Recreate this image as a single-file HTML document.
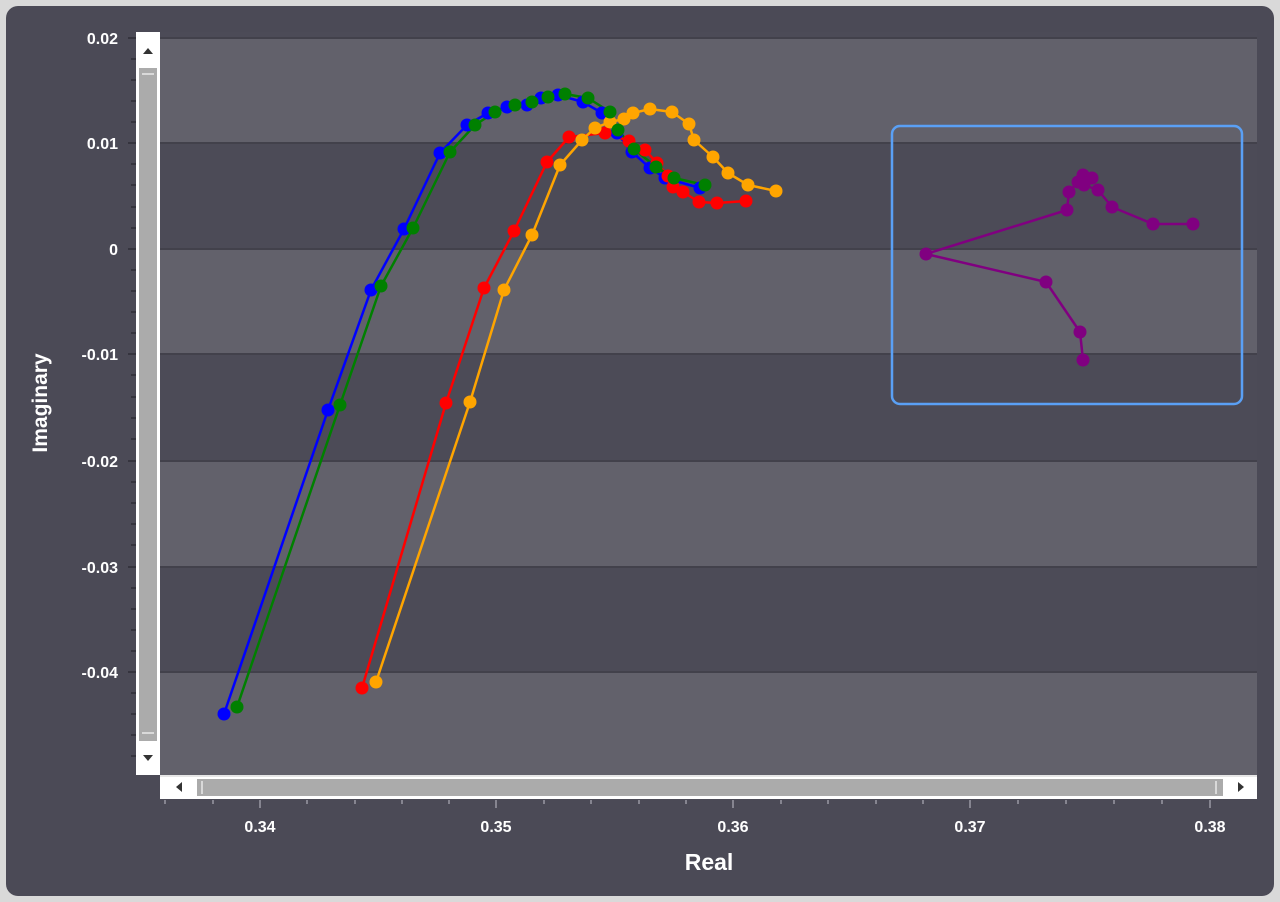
<!DOCTYPE html>
<html><head><meta charset="utf-8"><style>
html,body{margin:0;padding:0;background:#d9d9d9;width:1280px;height:902px;overflow:hidden}
svg{display:block;font-family:"Liberation Sans",sans-serif}
</style></head><body>
<svg width="1280" height="902" viewBox="0 0 1280 902">
<rect x="0" y="0" width="1280" height="902" fill="#d9d9d9"/>
<rect x="6" y="6" width="1268" height="890" rx="12" fill="#4b4a56"/>
<rect x="160" y="32" width="1097" height="743" fill="#4c4b57"/>
<g fill="#62616b">
<rect x="160" y="38" width="1097" height="105"/>
<rect x="160" y="249" width="1097" height="105"/>
<rect x="160" y="461" width="1097" height="106"/>
<rect x="160" y="672" width="1097" height="103"/>
</g>
<g stroke="#42414b" stroke-width="2">
<line x1="160" y1="38" x2="1257" y2="38"/><line x1="160" y1="143" x2="1257" y2="143"/>
<line x1="160" y1="249" x2="1257" y2="249"/><line x1="160" y1="354" x2="1257" y2="354"/>
<line x1="160" y1="461" x2="1257" y2="461"/><line x1="160" y1="567" x2="1257" y2="567"/>
<line x1="160" y1="672" x2="1257" y2="672"/>
</g>
<g stroke="#2e2d36" stroke-width="1.5">
<line x1="128" y1="38" x2="136" y2="38"/><line x1="131" y1="59" x2="136" y2="59"/><line x1="131" y1="80" x2="136" y2="80"/><line x1="131" y1="101" x2="136" y2="101"/><line x1="131" y1="122" x2="136" y2="122"/>
<line x1="128" y1="143" x2="136" y2="143"/><line x1="131" y1="164" x2="136" y2="164"/><line x1="131" y1="185" x2="136" y2="185"/><line x1="131" y1="207" x2="136" y2="207"/><line x1="131" y1="228" x2="136" y2="228"/>
<line x1="128" y1="249" x2="136" y2="249"/><line x1="131" y1="270" x2="136" y2="270"/><line x1="131" y1="291" x2="136" y2="291"/><line x1="131" y1="312" x2="136" y2="312"/><line x1="131" y1="333" x2="136" y2="333"/>
<line x1="128" y1="354" x2="136" y2="354"/><line x1="131" y1="375" x2="136" y2="375"/><line x1="131" y1="397" x2="136" y2="397"/><line x1="131" y1="418" x2="136" y2="418"/><line x1="131" y1="439" x2="136" y2="439"/>
<line x1="128" y1="461" x2="136" y2="461"/><line x1="131" y1="482" x2="136" y2="482"/><line x1="131" y1="503" x2="136" y2="503"/><line x1="131" y1="524" x2="136" y2="524"/><line x1="131" y1="545" x2="136" y2="545"/>
<line x1="128" y1="567" x2="136" y2="567"/><line x1="131" y1="588" x2="136" y2="588"/><line x1="131" y1="609" x2="136" y2="609"/><line x1="131" y1="630" x2="136" y2="630"/><line x1="131" y1="651" x2="136" y2="651"/>
<line x1="128" y1="672" x2="136" y2="672"/><line x1="131" y1="693" x2="136" y2="693"/><line x1="131" y1="714" x2="136" y2="714"/><line x1="131" y1="735" x2="136" y2="735"/><line x1="131" y1="756" x2="136" y2="756"/>
</g>
<g fill="#fff" font-weight="bold" font-size="16" text-anchor="end">
<text x="118" y="44">0.02</text><text x="118" y="149">0.01</text><text x="118" y="255">0</text>
<text x="118" y="360">-0.01</text><text x="118" y="467">-0.02</text><text x="118" y="573">-0.03</text><text x="118" y="678">-0.04</text>
</g>
<text transform="translate(47,403) rotate(-90)" fill="#fff" font-weight="bold" font-size="21" text-anchor="middle">Imaginary</text>
<rect x="136" y="32" width="24" height="743" fill="#fff"/>
<rect x="139" y="68" width="18" height="673" fill="#ababab"/>
<line x1="142" y1="74" x2="154" y2="74" stroke="#e8e8e8" stroke-width="1.5"/>
<line x1="142" y1="733" x2="154" y2="733" stroke="#e8e8e8" stroke-width="1.5"/>
<path d="M143 54 L153 54 L148 48 Z" fill="#333"/>
<path d="M143 755 L153 755 L148 761 Z" fill="#333"/>
<rect x="160" y="775" width="1097" height="24" fill="#fff"/>
<rect x="160" y="775" width="1097" height="2" fill="#e6e6e6"/>
<rect x="197" y="779" width="1026" height="17" fill="#ababab"/>
<line x1="202" y1="781" x2="202" y2="794" stroke="#e8e8e8" stroke-width="1.5"/>
<line x1="1216" y1="781" x2="1216" y2="794" stroke="#e8e8e8" stroke-width="1.5"/>
<path d="M182 782 L182 792 L176 787 Z" fill="#333"/>
<path d="M1238 782 L1238 792 L1244 787 Z" fill="#333"/>
<g stroke="#9a99a3" stroke-width="1.5">
<line x1="165" y1="800" x2="165" y2="804"/><line x1="213" y1="800" x2="213" y2="804"/><line x1="260" y1="800" x2="260" y2="808"/>
<line x1="307" y1="800" x2="307" y2="804"/><line x1="355" y1="800" x2="355" y2="804"/><line x1="402" y1="800" x2="402" y2="804"/><line x1="449" y1="800" x2="449" y2="804"/><line x1="496" y1="800" x2="496" y2="808"/>
<line x1="544" y1="800" x2="544" y2="804"/><line x1="591" y1="800" x2="591" y2="804"/><line x1="639" y1="800" x2="639" y2="804"/><line x1="686" y1="800" x2="686" y2="804"/><line x1="733" y1="800" x2="733" y2="808"/>
<line x1="781" y1="800" x2="781" y2="804"/><line x1="828" y1="800" x2="828" y2="804"/><line x1="876" y1="800" x2="876" y2="804"/><line x1="923" y1="800" x2="923" y2="804"/><line x1="970" y1="800" x2="970" y2="808"/>
<line x1="1018" y1="800" x2="1018" y2="804"/><line x1="1066" y1="800" x2="1066" y2="804"/><line x1="1114" y1="800" x2="1114" y2="804"/><line x1="1162" y1="800" x2="1162" y2="804"/><line x1="1210" y1="800" x2="1210" y2="808"/>
</g>
<g fill="#fff" font-weight="bold" font-size="16" text-anchor="middle">
<text x="260" y="832">0.34</text><text x="496" y="832">0.35</text><text x="733" y="832">0.36</text><text x="970" y="832">0.37</text><text x="1210" y="832">0.38</text>
</g>
<text x="709" y="870" fill="#fff" font-weight="bold" font-size="23" text-anchor="middle">Real</text>
<g stroke-width="2.5" fill="none" stroke-linejoin="round">
<polyline stroke="#0000ff" points="224,714 328,410 371,290 404,229 440,153 467,125 488,113 507,107 527,105 541,98 558,95 583,102 602,113 617,133 632,152 650,168 665,178 700,188"/>
<polyline stroke="#ff0000" points="362,688 446,403 484,288 514,231 547,162 569,137 605,133 629,141 645,150 657,163 668,176 673,187 683,192 699,202 717,203 746,201"/>
<polyline stroke="#ffa500" points="376,682 470,402 504,290 532,235 560,165 582,140 595,128 610,122 624,119 633,113 650,109 672,112 689,124 694,140 713,157 728,173 748,185 776,191"/>
<polyline stroke="#008000" points="237,707 340,405 381,286 413,228 450,152 475,125 495,112 515,105 532,102 548,97 565,94 588,98 610,112 618,130 634,149 656,167 674,178 705,185"/>
<polyline stroke="#800080" points="1083,360 1080,332 1046,282 926,254 1067,210 1069,192 1078,182 1083,175 1092,178 1084,185 1098,190 1112,207 1153,224 1193,224"/>
</g>
<g fill="#0000ff">
<circle cx="224" cy="714" r="6.5"/><circle cx="328" cy="410" r="6.5"/><circle cx="371" cy="290" r="6.5"/><circle cx="404" cy="229" r="6.5"/><circle cx="440" cy="153" r="6.5"/><circle cx="467" cy="125" r="6.5"/><circle cx="488" cy="113" r="6.5"/><circle cx="507" cy="107" r="6.5"/><circle cx="527" cy="105" r="6.5"/><circle cx="541" cy="98" r="6.5"/><circle cx="558" cy="95" r="6.5"/><circle cx="583" cy="102" r="6.5"/><circle cx="602" cy="113" r="6.5"/><circle cx="617" cy="133" r="6.5"/><circle cx="632" cy="152" r="6.5"/><circle cx="650" cy="168" r="6.5"/><circle cx="665" cy="178" r="6.5"/><circle cx="700" cy="188" r="6.5"/>
</g>
<g fill="#ff0000">
<circle cx="362" cy="688" r="6.5"/><circle cx="446" cy="403" r="6.5"/><circle cx="484" cy="288" r="6.5"/><circle cx="514" cy="231" r="6.5"/><circle cx="547" cy="162" r="6.5"/><circle cx="569" cy="137" r="6.5"/><circle cx="605" cy="133" r="6.5"/><circle cx="629" cy="141" r="6.5"/><circle cx="645" cy="150" r="6.5"/><circle cx="657" cy="163" r="6.5"/><circle cx="668" cy="176" r="6.5"/><circle cx="673" cy="187" r="6.5"/><circle cx="683" cy="192" r="6.5"/><circle cx="699" cy="202" r="6.5"/><circle cx="717" cy="203" r="6.5"/><circle cx="746" cy="201" r="6.5"/>
</g>
<g fill="#ffa500">
<circle cx="376" cy="682" r="6.5"/><circle cx="470" cy="402" r="6.5"/><circle cx="504" cy="290" r="6.5"/><circle cx="532" cy="235" r="6.5"/><circle cx="560" cy="165" r="6.5"/><circle cx="582" cy="140" r="6.5"/><circle cx="595" cy="128" r="6.5"/><circle cx="610" cy="122" r="6.5"/><circle cx="624" cy="119" r="6.5"/><circle cx="633" cy="113" r="6.5"/><circle cx="650" cy="109" r="6.5"/><circle cx="672" cy="112" r="6.5"/><circle cx="689" cy="124" r="6.5"/><circle cx="694" cy="140" r="6.5"/><circle cx="713" cy="157" r="6.5"/><circle cx="728" cy="173" r="6.5"/><circle cx="748" cy="185" r="6.5"/><circle cx="776" cy="191" r="6.5"/>
</g>
<g fill="#008000">
<circle cx="237" cy="707" r="6.5"/><circle cx="340" cy="405" r="6.5"/><circle cx="381" cy="286" r="6.5"/><circle cx="413" cy="228" r="6.5"/><circle cx="450" cy="152" r="6.5"/><circle cx="475" cy="125" r="6.5"/><circle cx="495" cy="112" r="6.5"/><circle cx="515" cy="105" r="6.5"/><circle cx="532" cy="102" r="6.5"/><circle cx="548" cy="97" r="6.5"/><circle cx="565" cy="94" r="6.5"/><circle cx="588" cy="98" r="6.5"/><circle cx="610" cy="112" r="6.5"/><circle cx="618" cy="130" r="6.5"/><circle cx="634" cy="149" r="6.5"/><circle cx="656" cy="167" r="6.5"/><circle cx="674" cy="178" r="6.5"/><circle cx="705" cy="185" r="6.5"/>
</g>
<g fill="#800080">
<circle cx="1083" cy="360" r="6.5"/><circle cx="1080" cy="332" r="6.5"/><circle cx="1046" cy="282" r="6.5"/><circle cx="926" cy="254" r="6.5"/><circle cx="1067" cy="210" r="6.5"/><circle cx="1069" cy="192" r="6.5"/><circle cx="1078" cy="182" r="6.5"/><circle cx="1083" cy="175" r="6.5"/><circle cx="1092" cy="178" r="6.5"/><circle cx="1084" cy="185" r="6.5"/><circle cx="1098" cy="190" r="6.5"/><circle cx="1112" cy="207" r="6.5"/><circle cx="1153" cy="224" r="6.5"/><circle cx="1193" cy="224" r="6.5"/>
</g>
<rect x="892" y="126" width="350" height="278" rx="8" fill="none" stroke="#5aa0f5" stroke-width="2.5"/>
</svg>
</body></html>
